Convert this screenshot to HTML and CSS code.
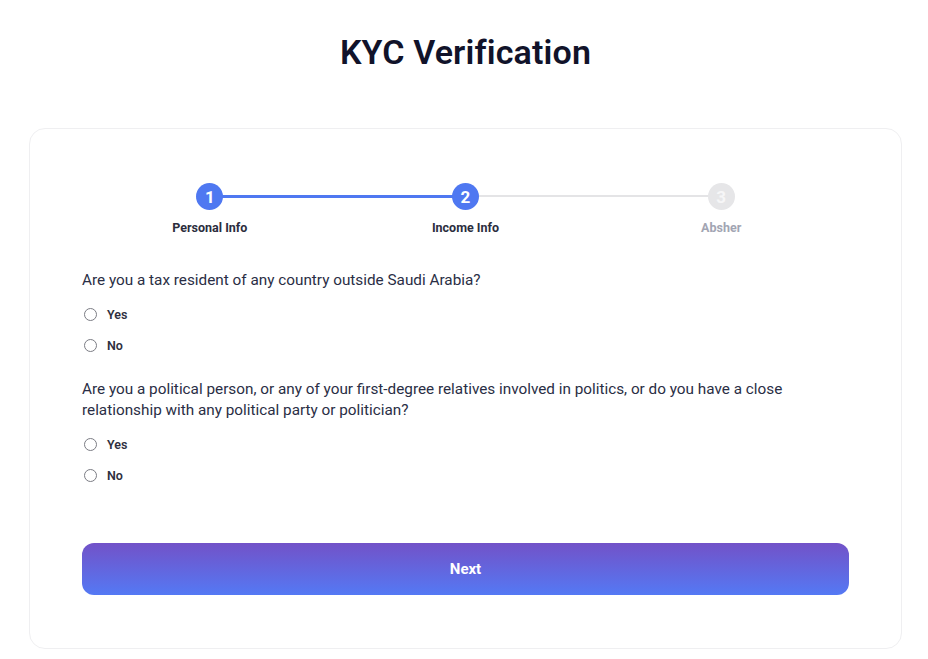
FILE: index.html
```html
<!DOCTYPE html>
<html>
<head>
<meta charset="utf-8">
<link rel="stylesheet" href="styles.css">
</head>
<body>
<h1 class="title">KYC Verification</h1>
<div class="card">
  <div class="stepper">
    <div class="step done">
      <div class="circle">1</div>
      <div class="label">Personal Info</div>
    </div>
    <div class="step active">
      <div class="circle">2</div>
      <div class="label">Income Info</div>
    </div>
    <div class="step todo">
      <div class="circle">3</div>
      <div class="label">Absher</div>
    </div>
  </div>

  <div class="question">
    <p class="q-text">Are you a tax resident of any country outside Saudi Arabia?</p>
    <label class="option"><span class="radio"></span>Yes</label>
    <label class="option"><span class="radio"></span>No</label>
  </div>

  <div class="question q2">
    <p class="q-text">Are you a political person, or any of your first-degree relatives involved in politics, or do you have a close relationship with any political party or politician?</p>
    <label class="option"><span class="radio"></span>Yes</label>
    <label class="option"><span class="radio"></span>No</label>
  </div>

  <button class="next">Next</button>
</div>
</body>
</html>
```

FILE: styles.css
```css
* { box-sizing: border-box; }
body {
  margin: 0;
  background: #ffffff;
  font-family: Roboto, "Liberation Sans", sans-serif;
  color: #22263a;
}
.title {
  margin: 0;
  padding-top: 32px;
  height: 128px;
  text-align: center;
  padding-left: 3px;
  font-size: 34px;
  font-weight: 600;
  letter-spacing: 0.15px;
  line-height: 40px;
  color: #11132a;
}
.card {
  margin-left: 29px;
  width: 873px;
  height: 521px;
  border: 1px solid #efeff1;
  border-radius: 16px;
  padding: 54px 52px 0 52px;
}
.stepper {
  display: grid;
  grid-template-columns: repeat(3, 1fr);
}
.step {
  position: relative;
  display: flex;
  flex-direction: column;
  align-items: center;
}
.step::before {
  content: "";
  position: absolute;
  top: 12px;
  height: 2px;
  left: -50%;
  right: 50%;
  background: #e4e4e6;
  z-index: 0;
}
.step:first-child::before { display: none; }
.step.active::before { background: #4f78f1; height: 3px; }
.circle {
  position: relative;
  z-index: 1;
  width: 27px;
  height: 27px;
  border-radius: 50%;
  background: #4f78f1;
  color: #fff;
  font-size: 17px;
  font-weight: 700;
  display: flex;
  align-items: center;
  justify-content: center;
}
.step.todo .circle { background: #e6e6e8; color: #f6f6f7; }
.label {
  margin-top: 10px;
  font-size: 12.5px;
  line-height: 15px;
  font-weight: 700;
  color: #2b2d3d;
}
.step.todo .label { color: #a2a5b3; }

.question { margin-top: 35px; }
.q2 { margin-top: 18px; }
.q-text {
  margin: 0 0 8px 0;
  font-size: 15.3px;
  line-height: 21px;
  color: #2a2e45;
  max-width: 725px;
}
.option {
  display: flex;
  align-items: center;
  height: 31px;
  font-size: 12.5px;
  font-weight: 600;
  color: #2e3040;
}
.radio {
  width: 13px;
  height: 13px;
  border: 1.3px solid #7b7c84;
  border-radius: 50%;
  margin-left: 2px;
  margin-right: 10px;
}
.next {
  display: block;
  margin-top: 52px;
  width: 100%;
  height: 52px;
  border: none;
  border-radius: 12px;
  background: linear-gradient(180deg, #7252c8 0%, #5479f4 100%);
  color: #fff;
  font-family: Roboto, "Liberation Sans", sans-serif;
  font-size: 15px;
  font-weight: 700;
}
```
